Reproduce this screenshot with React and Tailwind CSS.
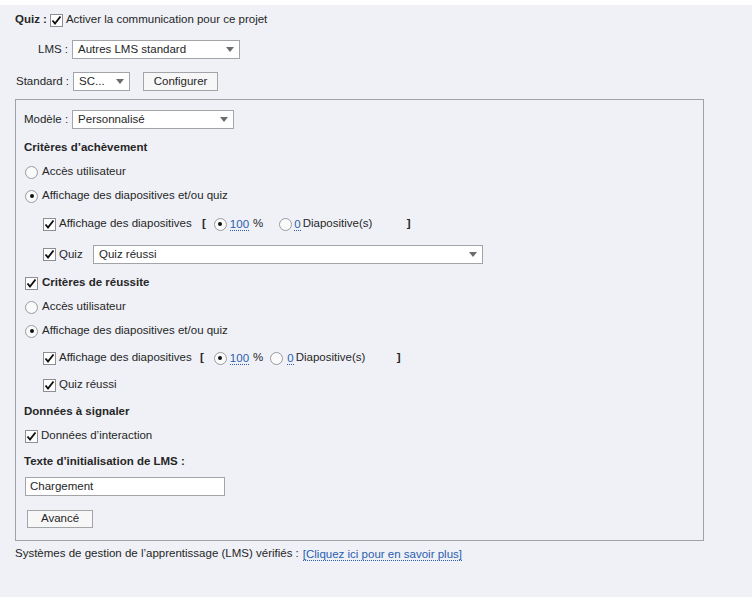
import React from "react";

const Check = ({ className = "" }) => (
  <span className={"inline-flex w-[13px] h-[13px] border border-[#8e8f94] bg-white items-center justify-center shrink-0 " + className}>
    <svg width="11" height="11" viewBox="0 0 11 11">
      <path d="M1.5 5.5 L4 8.5 L9.5 1.5" fill="none" stroke="#111" strokeWidth="1.9" />
    </svg>
  </span>
);

const Radio = ({ on, className = "" }) => (
  <span className={"inline-flex w-[13px] h-[13px] rounded-full border border-[#9a9ba0] bg-[#fafafa] items-center justify-center shrink-0 " + className}>
    {on && <span className="w-[4px] h-[4px] rounded-full bg-[#111]" />}
  </span>
);

const Select = ({ w, text }) => (
  <div className={"h-[19px] border border-[#a3a4a8] bg-white flex items-center justify-between pl-[5px] pr-[5px] " + w}>
    <span>{text}</span>
    <svg width="8" height="6" viewBox="0 0 8 6"><path d="M0 0 H8 L4 5 Z" fill="#6b6c70" /></svg>
  </div>
);

const Row = ({ children, className = "" }) => (
  <div className={"h-[18px] pt-[2px] flex items-center " + className}>{children}</div>
);

const Blue = ({ children }) => (
  <span className="text-[#2a5db0] border-b border-dotted border-[#2a5db0] leading-[12px]">{children}</span>
);

export default function App() {
  return (
    <div className="w-[752px] h-[597px] bg-[#eff1f6] text-[#262626] text-[11.5px] overflow-hidden" style={{ fontFamily: '"Liberation Sans", Arial, sans-serif' }}>
      <div className="h-[5px] bg-white" />
      <Row className="mt-[5px] pl-[15px]">
        <span className="font-bold mr-[3px]">Quiz :</span>
        <Check className="mr-[3px]" />
        <span>Activer la communication pour ce projet</span>
      </Row>
      <div className="mt-[12px] h-[19px] flex items-center pl-[38px]">
        <span className="mr-[4px]">LMS :</span>
        <Select w="w-[168px]" text="Autres LMS standard" />
      </div>
      <div className="mt-[13px] h-[19px] flex items-center pl-[16px]">
        <span className="mr-[4px]">Standard :</span>
        <Select w="w-[57px]" text="SC..." />
        <div className="ml-[13px] w-[75px] h-[19px] border border-[#a3a4a8] bg-[#f7f7f7] flex items-center justify-center">Configurer</div>
      </div>

      <div className="mt-[8px] ml-[15px] w-[689px] border border-[#a0a1a5] pl-[8px] pt-[10px] pb-[12px]">
        <div className="h-[19px] flex items-center">
          <span className="mr-[4px]">Modèle :</span>
          <Select w="w-[162px]" text="Personnalisé" />
        </div>
        <Row className="mt-[9px] font-bold">Critères d’achèvement</Row>
        <Row className="mt-[6px]"><Radio className="ml-[1px] mr-[4px]" /><span>Accès utilisateur</span></Row>
        <Row className="mt-[6px]"><Radio on className="ml-[1px] mr-[4px]" /><span>Affichage des diapositives et/ou quiz</span></Row>
        <Row className="mt-[10px] pl-[19px]">
          <Check className="mr-[3px]" />
          <span className="w-[143px]">Affichage des diapositives</span>
          <span className="font-bold">[</span>
          <Radio on className="ml-[8px] mr-[3px]" />
          <Blue>100</Blue>
          <span className="ml-[4px]">%</span>
          <Radio className="ml-[16px] mr-[2px]" />
          <Blue>0</Blue>
          <span className="ml-[2px] w-[104px]">Diapositive(s)</span>
          <span className="font-bold">]</span>
        </Row>
        <div className="mt-[13px] h-[19px] flex items-center pl-[19px]">
          <Check className="mr-[3px]" />
          <span className="w-[34px]">Quiz</span>
          <Select w="w-[390px]" text="Quiz réussi" />
        </div>
        <Row className="mt-[9px]">
          <Check className="ml-[1px] mr-[4px]" />
          <span className="font-bold">Critères de réussite</span>
        </Row>
        <Row className="mt-[6px]"><Radio className="ml-[1px] mr-[4px]" /><span>Accès utilisateur</span></Row>
        <Row className="mt-[6px]"><Radio on className="ml-[1px] mr-[4px]" /><span>Affichage des diapositives et/ou quiz</span></Row>
        <Row className="mt-[9px] pl-[19px]">
          <Check className="mr-[3px]" />
          <span className="w-[141px]">Affichage des diapositives</span>
          <span className="font-bold">[</span>
          <Radio on className="ml-[10px] mr-[3px]" />
          <Blue>100</Blue>
          <span className="ml-[4px]">%</span>
          <Radio className="ml-[7px] mr-[4px]" />
          <Blue>0</Blue>
          <span className="ml-[2px] w-[101px]">Diapositive(s)</span>
          <span className="font-bold">]</span>
        </Row>
        <Row className="mt-[9px] pl-[19px]">
          <Check className="mr-[3px]" />
          <span>Quiz réussi</span>
        </Row>
        <Row className="mt-[9px] font-bold">Données à signaler</Row>
        <Row className="mt-[6px]">
          <Check className="ml-[1px] mr-[3px]" />
          <span>Données d’interaction</span>
        </Row>
        <Row className="mt-[8px] font-bold">Texte d’initialisation de LMS :</Row>
        <div className="mt-[7px] ml-[1px] w-[200px] h-[19px] border border-[#a3a4a8] bg-white flex items-center pl-[4px]">Chargement</div>
        <div className="mt-[14px] ml-[3px] w-[66px] h-[18px] border border-[#a3a4a8] bg-[#f7f7f7] flex items-center justify-center">Avancé</div>
      </div>

      <Row className="mt-[3px] pl-[15px]">
        <span>Systèmes de gestion de l’apprentissage (LMS) vérifiés :</span>
        <span className="ml-[4px] text-[#2a5db0] border-b border-dotted border-[#2a5db0] leading-[12px]">[Cliquez ici pour en savoir plus]</span>
      </Row>
    </div>
  );
}
